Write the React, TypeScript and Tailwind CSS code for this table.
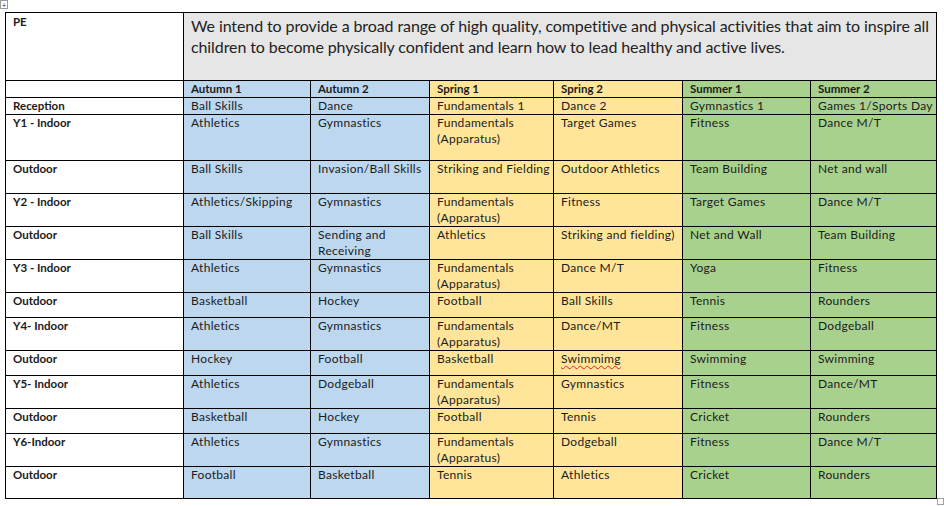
import React from 'react';

const terms = ['Autumn 1', 'Autumn 2', 'Spring 1', 'Spring 2', 'Summer 1', 'Summer 2'];

// column fills: two autumn blues, two spring yellows, two summer greens
const fills = [
  'bg-[#bdd7ee]',
  'bg-[#bdd7ee]',
  'bg-[#ffe599]',
  'bg-[#ffe599]',
  'bg-[#a9d18e]',
  'bg-[#a9d18e]',
];

const FA = 'Fundamentals\n(Apparatus)';

const rows: { label: string; h: string; cells: string[] }[] = [
  { label: 'Reception', h: 'h-[17px]', cells: ['Ball Skills', 'Dance', 'Fundamentals 1', 'Dance 2', 'Gymnastics 1', 'Games 1/Sports Day'] },
  { label: 'Y1 - Indoor', h: 'h-[46px]', cells: ['Athletics', 'Gymnastics', FA, 'Target Games', 'Fitness', 'Dance M/T'] },
  { label: 'Outdoor', h: 'h-[33px]', cells: ['Ball Skills', 'Invasion/Ball Skills', 'Striking and Fielding', 'Outdoor Athletics', 'Team Building', 'Net and wall'] },
  { label: 'Y2 - Indoor', h: 'h-[33px]', cells: ['Athletics/Skipping', 'Gymnastics', FA, 'Fitness', 'Target Games', 'Dance M/T'] },
  { label: 'Outdoor', h: 'h-[33px]', cells: ['Ball Skills', 'Sending and\nReceiving', 'Athletics', 'Striking and fielding)', 'Net and Wall', 'Team Building'] },
  { label: 'Y3 - Indoor', h: 'h-[32px]', cells: ['Athletics', 'Gymnastics', FA, 'Dance M/T', 'Yoga', 'Fitness'] },
  { label: 'Outdoor', h: 'h-[25px]', cells: ['Basketball', 'Hockey', 'Football', 'Ball Skills', 'Tennis', 'Rounders'] },
  { label: 'Y4- Indoor', h: 'h-[33px]', cells: ['Athletics', 'Gymnastics', FA, 'Dance/MT', 'Fitness', 'Dodgeball'] },
  { label: 'Outdoor', h: 'h-[25px]', cells: ['Hockey', 'Football', 'Basketball', 'Swimmimg', 'Swimming', 'Swimming'] },
  { label: 'Y5- Indoor', h: 'h-[33px]', cells: ['Athletics', 'Dodgeball', FA, 'Gymnastics', 'Fitness', 'Dance/MT'] },
  { label: 'Outdoor', h: 'h-[25px]', cells: ['Basketball', 'Hockey', 'Football', 'Tennis', 'Cricket', 'Rounders'] },
  { label: 'Y6-Indoor', h: 'h-[33px]', cells: ['Athletics', 'Gymnastics', FA, 'Dodgeball', 'Fitness', 'Dance M/T'] },
  { label: 'Outdoor', h: 'h-[32px]', cells: ['Football', 'Basketball', 'Tennis', 'Athletics', 'Cricket', 'Rounders'] },
];

const cell = 'border border-black px-[7px] align-top leading-[16px] whitespace-pre';

export default function App() {
  return (
    <div className="relative w-[944px] h-[506px] overflow-hidden bg-white pt-[12px] pl-[5px] font-['Lato',sans-serif] text-[#1b1b1b]">
      {/* Word table move handle */}
      <div className="absolute left-0 top-0 w-[8px] h-[9px] border border-[#9a9a9a] bg-white flex items-center justify-center text-[8px] leading-none text-[#444]">
        +
      </div>

      <table className="table-fixed border-collapse w-[931px] text-[12px] tracking-[0.3px]">
        <colgroup>
          <col className="w-[178px]" />
          <col className="w-[127px]" />
          <col className="w-[119px]" />
          <col className="w-[124px]" />
          <col className="w-[129px]" />
          <col className="w-[128px]" />
          <col className="w-[126px]" />
        </colgroup>
        <tbody>
          <tr className="h-[68px]">
            <td className={`${cell} font-bold text-[11.5px] tracking-normal pt-[1px]`}>PE</td>
            <td colSpan={6} className="border border-black px-[7px] align-top bg-[#e7e6e6] text-[16px] leading-[21px] tracking-[-0.1px] text-[#222] pt-[2px]">
              We intend to provide a broad range of high quality, competitive and physical activities that aim to inspire all children to become physically confident and learn how to lead healthy and active lives.
            </td>
          </tr>
          <tr className="h-[17px]">
            <td className={cell}></td>
            {terms.map((t, i) => (
              <td key={t} className={`${cell} ${fills[i]} font-bold text-[11.5px] tracking-normal`}>
                {t}
              </td>
            ))}
          </tr>
          {rows.map((r, ri) => (
            <tr key={ri} className={r.h}>
              <td className={`${cell} font-bold text-[11.5px] tracking-normal`}>{r.label}</td>
              {r.cells.map((c, ci) => (
                <td key={ci} className={`${cell} ${fills[ci]}`}>
                  {c === 'Swimmimg' ? (
                    <span className="underline decoration-wavy decoration-[#e02020] decoration-1 underline-offset-2">{c}</span>
                  ) : (
                    c
                  )}
                </td>
              ))}
            </tr>
          ))}
        </tbody>
      </table>

      {/* Word table resize handle */}
      <div className="absolute left-[937px] top-[498px] w-[7px] h-[7px] border border-[#a0a0a0] bg-white" />
    </div>
  );
}
